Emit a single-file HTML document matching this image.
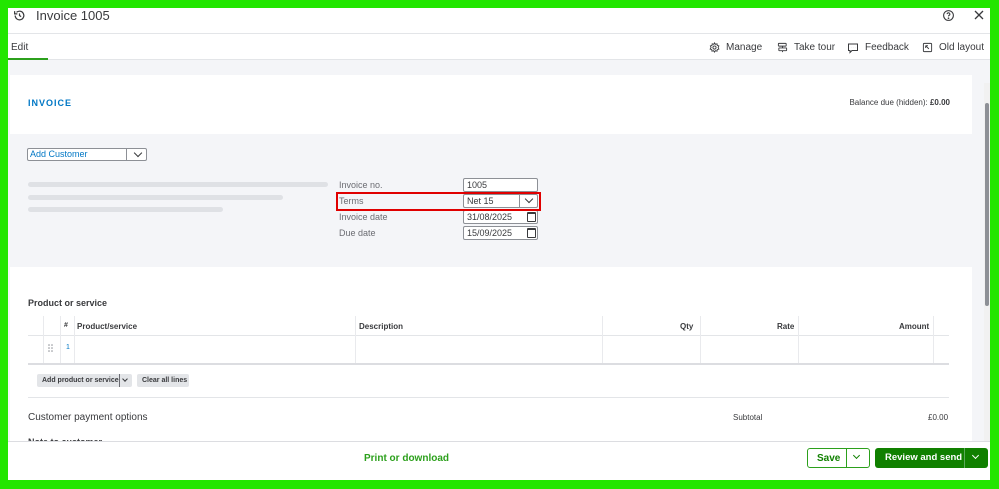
<!DOCTYPE html>
<html><head><meta charset="utf-8"><style>
*{box-sizing:border-box;margin:0;padding:0}
body{width:999px;height:489px;background:#22e600;font-family:"Liberation Sans",Arial,sans-serif;color:#393a3d;position:relative;overflow:hidden}
.a{position:absolute}
.inner{left:8px;top:8px;width:982px;height:472px;background:#f4f5f8;overflow:hidden}
.t{font-size:9px}
.box{position:absolute;background:#fff;border:1px solid #8d9096;border-radius:2px;font-size:9px;padding:1px 3px;color:#393a3d;line-height:11px}
.cal{position:absolute;left:63px;top:1px;width:9px;height:10px;border:1px solid #393a3d;border-top-width:2px;border-radius:1px}
.chev{display:inline-block;width:6px;height:6px;border-right:1.3px solid currentColor;border-bottom:1.3px solid currentColor;transform:rotate(45deg)}
.vl{position:absolute;top:0;width:1px;height:47px;background:#e9eaed}
.hd{position:absolute;top:6px;font-size:8px;font-weight:bold}
</style></head><body>
<div class="a inner">
 <div class="a" style="left:0;top:0;width:982px;height:26px;background:#fff;border-bottom:1px solid #e3e5e8"></div>
 <svg class="a" style="left:5px;top:1px" width="13" height="13" viewBox="0 0 24 24" fill="none" stroke="#393a3d" stroke-width="2.2"><path d="M4 12a8 8 0 1 0 2.5-5.8"/><path d="M3 4v5h5"/><path d="M12 8v4l3 2"/></svg>
 <div class="a" style="left:28px;top:0px;font-size:13px;color:#393a3d">Invoice 1005</div>
 <svg class="a" style="left:934px;top:1px" width="13" height="13" viewBox="0 0 24 24" fill="none" stroke="#393a3d" stroke-width="2"><circle cx="12" cy="12" r="9"/><path d="M9.5 9.5a2.5 2.5 0 1 1 3.5 2.3c-.7.4-1 .9-1 1.7"/><circle cx="12" cy="17" r=".6" fill="#393a3d"/></svg>
 <svg class="a" style="left:966px;top:2px" width="10" height="10" viewBox="0 0 10 10" stroke="#393a3d" stroke-width="1.3"><path d="M1 1L9 9M9 1L1 9"/></svg>
 <div class="a" style="left:0;top:26px;width:982px;height:26px;background:#fff;border-bottom:1px solid #e3e5e8"></div>
 <div class="a" style="left:3px;top:34px;font-size:10px">Edit</div>
 <div class="a" style="left:0;top:50px;width:40px;height:2px;background:#2ca01c"></div>
 <svg class="a" style="left:701px;top:34px" width="11" height="11" viewBox="0 0 24 24" fill="none" stroke="#393a3d" stroke-width="2"><circle cx="12" cy="12" r="3.5"/><path d="M12 2l2 3 3.5-1 .5 3.5 3.5 1-1.5 3.5 1.5 3.5-3.5 1-.5 3.5-3.5-1-2 3-2-3-3.5 1-.5-3.5-3.5-1L4.5 12 3 8.5l3.5-1L7 4l3.5 1z"/></svg>
 <div class="a" style="left:718px;top:34px;font-size:10px">Manage</div>
 <svg class="a" style="left:769px;top:34px" width="11" height="11" viewBox="0 0 24 24" fill="none" stroke="#393a3d" stroke-width="2"><rect x="3" y="3" width="17" height="6" rx="1"/><rect x="4" y="13" width="17" height="6" rx="1"/><path d="M12 9v4M12 19v3"/></svg>
 <div class="a" style="left:786px;top:34px;font-size:10px">Take tour</div>
 <svg class="a" style="left:839px;top:34px" width="12" height="12" viewBox="0 0 24 24" fill="none" stroke="#393a3d" stroke-width="2"><path d="M3 4h18v13H10l-4 4v-4H3z"/><path d="M8 11h.1M12 11h.1M16 11h.1"/></svg>
 <div class="a" style="left:857px;top:34px;font-size:10px">Feedback</div>
 <svg class="a" style="left:914px;top:34px" width="11" height="11" viewBox="0 0 24 24" fill="none" stroke="#393a3d" stroke-width="2"><rect x="3" y="3" width="18" height="18" rx="2"/><path d="M8 8l7 7M8 8v5M8 8h5"/></svg>
 <div class="a" style="left:931px;top:34px;font-size:10px">Old layout</div>
 <div class="a" style="left:2px;top:67px;width:962px;height:420px;background:#fff">
  <div class="a" style="left:18px;top:23px;font-size:9px;font-weight:bold;color:#0077c5;letter-spacing:1px">INVOICE</div>
  <div class="a" style="right:22px;top:23px;font-size:8px;color:#393a3d">Balance due (hidden): <b>£0.00</b></div>
  <div class="a" style="left:0;top:59px;width:962px;height:133px;background:#f4f5f8"></div>
  <div class="box" style="left:17px;top:73px;width:120px;height:13px;padding:0 2px;color:#0077c5">Add Customer<span class="a" style="left:98px;top:0;width:1px;height:11px;background:#8d9096"></span><span class="a chev" style="left:107px;top:1px;color:#393a3d"></span></div>
  <div class="a" style="left:18px;top:107px;width:300px;height:5px;background:#dfe1e5;border-radius:3px"></div>
  <div class="a" style="left:18px;top:120px;width:255px;height:5px;background:#dfe1e5;border-radius:3px"></div>
  <div class="a" style="left:18px;top:132px;width:195px;height:5px;background:#dfe1e5;border-radius:3px"></div>
  <div class="a t" style="left:329px;top:105px;color:#6b6c72">Invoice no.</div>
  <div class="a t" style="left:329px;top:121px;color:#6b6c72">Terms</div>
  <div class="a t" style="left:329px;top:137px;color:#6b6c72">Invoice date</div>
  <div class="a t" style="left:329px;top:153px;color:#6b6c72">Due date</div>
  <div class="box" style="left:453px;top:103px;width:75px;height:14px">1005</div>
  <div class="box" style="left:453px;top:119px;width:75px;height:14px">Net 15<span class="a" style="left:55px;top:0;width:1px;height:12px;background:#8d9096"></span><span class="a chev" style="left:62px;top:1px"></span></div>
  <div class="box" style="left:453px;top:135px;width:75px;height:14px">31/08/2025<span class="cal"></span></div>
  <div class="box" style="left:453px;top:151px;width:75px;height:14px">15/09/2025<span class="cal"></span></div>
  <div class="a" style="left:326px;top:117px;width:205px;height:19px;border:2px solid #e00000"></div>
  <div class="a" style="left:18px;top:223px;font-size:9px;font-weight:bold">Product or service</div>
  <div class="a" style="left:18px;top:241px;width:921px;height:49px;border-bottom:2px solid #dcdde1">
   <div class="a" style="left:0;top:19px;width:921px;height:1px;background:#e3e5e8"></div>
   <div class="vl" style="left:15px"></div><div class="vl" style="left:32px"></div><div class="vl" style="left:46px"></div><div class="vl" style="left:327px"></div><div class="vl" style="left:574px"></div><div class="vl" style="left:672px"></div><div class="vl" style="left:770px"></div><div class="vl" style="left:905px"></div>
   <div class="hd" style="left:36px;font-size:7px">#</div>
   <div class="hd" style="left:49px">Product/service</div>
   <div class="hd" style="left:331px">Description</div>
   <div class="hd" style="left:652px">Qty</div>
   <div class="hd" style="left:749px">Rate</div>
   <div class="hd" style="left:871px">Amount</div>
   <svg class="a" style="left:20px;top:28px" width="5" height="8" viewBox="0 0 5 8" fill="#8d9096"><circle cx="1" cy="1" r=".8"/><circle cx="4" cy="1" r=".8"/><circle cx="1" cy="4" r=".8"/><circle cx="4" cy="4" r=".8"/><circle cx="1" cy="7" r=".8"/><circle cx="4" cy="7" r=".8"/></svg>
   <div class="a" style="left:38px;top:28px;font-size:7px;color:#0077c5">1</div>
  </div>
  <div class="a" style="left:27px;top:299px;width:95px;height:13px;background:#e3e5e8;border-radius:2px;font-size:7px;font-weight:bold;padding:3px 5px;white-space:nowrap">Add product or service<span class="a" style="left:82px;top:0;width:1px;height:13px;background:#6b6c72"></span><span class="a chev" style="left:86px;top:3px;width:4px;height:4px"></span></div>
  <div class="a" style="left:127px;top:299px;width:52px;height:13px;background:#e3e5e8;border-radius:2px;font-size:7px;font-weight:bold;padding:3px 5px;white-space:nowrap">Clear all lines</div>
  <div class="a" style="left:18px;top:322px;width:921px;height:1px;background:#e3e5e8"></div>
  <div class="a" style="left:18px;top:337px;font-size:10px">Customer payment options</div>
  <div class="a" style="left:723px;top:338px;font-size:8px">Subtotal</div>
  <div class="a" style="left:918px;top:338px;font-size:8px">£0.00</div>
  <div class="a" style="left:18px;top:362px;font-size:9px;font-weight:bold">Note to customer</div>
 </div>
 <div class="a" style="left:976px;top:75px;width:6px;height:360px;background:#f1f1f1"></div>
 <div class="a" style="left:977px;top:95px;width:4px;height:203px;background:#8d9096;border-radius:2px;z-index:5"></div>
 <div class="a" style="left:0;top:433px;width:982px;height:39px;background:#fff;border-top:1px solid #dcdde1"></div>
 <div class="a" style="left:356px;top:445px;font-size:10px;font-weight:bold;color:#2ca01c">Print or download</div>
 <div class="a" style="left:799px;top:440px;width:63px;height:20px;border:1px solid #2ca01c;border-radius:3px;background:#fff"><span class="a" style="left:9px;top:4px;font-size:10px;font-weight:bold;color:#108000">Save</span><span class="a" style="left:38px;top:0;width:1px;height:18px;background:#2ca01c"></span><span class="a chev" style="left:46px;top:4px;color:#108000;width:5px;height:5px"></span></div>
 <div class="a" style="left:867px;top:440px;width:113px;height:20px;background:#108000;border-radius:3px"><span class="a" style="left:10px;top:4px;font-size:9.5px;font-weight:bold;color:#fff;white-space:nowrap">Review and send</span><span class="a" style="left:89px;top:0;width:1px;height:20px;background:#5aa85a"></span><span class="a chev" style="left:98px;top:5px;color:#fff;width:5px;height:5px"></span></div>
</div>
</body></html>
